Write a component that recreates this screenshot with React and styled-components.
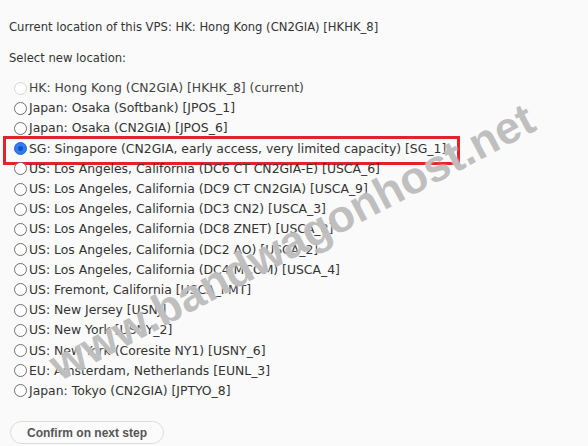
import React from "react";
import styled, { createGlobalStyle } from "styled-components";

const Global = createGlobalStyle`
  html, body { margin: 0; padding: 0; background: #fafafa; }
  body { font-family: "DejaVu Sans", Verdana, sans-serif; }
`;

const Page = styled.div`
  position: relative;
  width: 588px;
  height: 446px;
  overflow: hidden;
  padding: 17px 0 0 9px;
  box-sizing: border-box;
  color: #333;
  font-size: 12px;
`;

const Para = styled.div`
  line-height: 20px;
  font-size: 11.6px;
  margin-bottom: ${(p) => p.$mb || 0}px;
`;

const List = styled.div`
  display: flex;
  flex-direction: column;
  margin-left: 5px;
`;

const Row = styled.label`
  position: relative;
  display: flex;
  align-items: center;
  height: 20.2px;
  line-height: 20px;
  font-size: 12.4px;
  white-space: nowrap;
  color: ${(p) => (p.$disabled ? "#444" : "#333")};
`;

const Highlight = styled.span`
  position: absolute;
  left: -11px;
  top: -3px;
  width: 457px;
  height: 29px;
  border: 3px solid #e3222c;
  box-sizing: border-box;
  pointer-events: none;
`;

const Radio = styled.span`
  width: 13px;
  height: 13px;
  border-radius: 50%;
  box-sizing: border-box;
  margin-right: 2px;
  flex: none;
  background: ${(p) => (p.$checked ? "#2f7cf6" : "#fff")};
  border: 1px solid
    ${(p) => (p.$disabled ? "#d6d6d6" : p.$checked ? "#1f66d8" : "#6f6f6f")};
  display: flex;
  align-items: center;
  justify-content: center;
  &::after {
    content: "";
    display: ${(p) => (p.$checked ? "block" : "none")};
    width: 5px;
    height: 5px;
    border-radius: 50%;
    background: #1b4fb8;
  }
`;

const Button = styled.button`
  margin-top: 20px;
  margin-left: 1px;
  width: 154px;
  height: 23px;
  border-radius: 12px;
  border: 1px solid #dcdcdc;
  background: #fbfbfb;
  color: #555;
  font-family: "Liberation Sans", Arial, sans-serif;
  font-weight: bold;
  font-size: 12px;
  padding: 0;
`;

const Watermark = styled.div`
  position: absolute;
  left: 292px;
  top: 242px;
  transform: translate(-50%, -50%) rotate(-27.8deg);
  font-family: "Liberation Sans", Arial, sans-serif;
  font-weight: bold;
  font-size: 45px;
  color: rgba(180, 180, 180, 0.85);
  white-space: nowrap;
  text-shadow: 0 0 2px rgba(255, 255, 255, 0.9);
  pointer-events: none;
`;

const locations = [
  { t: "HK: Hong Kong (CN2GIA) [HKHK_8] (current)", disabled: true },
  { t: "Japan: Osaka (Softbank) [JPOS_1]" },
  { t: "Japan: Osaka (CN2GIA) [JPOS_6]" },
  { t: "SG: Singapore (CN2GIA, early access, very limited capacity) [SG_1]", checked: true },
  { t: "US: Los Angeles, California (DC6 CT CN2GIA-E) [USCA_6]" },
  { t: "US: Los Angeles, California (DC9 CT CN2GIA) [USCA_9]" },
  { t: "US: Los Angeles, California (DC3 CN2) [USCA_3]" },
  { t: "US: Los Angeles, California (DC8 ZNET) [USCA_8]" },
  { t: "US: Los Angeles, California (DC2 AO) [USCA_2]" },
  { t: "US: Los Angeles, California (DC4 MCOM) [USCA_4]" },
  { t: "US: Fremont, California [USCA_FMT]" },
  { t: "US: New Jersey [USNJ]" },
  { t: "US: New York [USNY_2]" },
  { t: "US: New York (Coresite NY1) [USNY_6]" },
  { t: "EU: Amsterdam, Netherlands [EUNL_3]" },
  { t: "Japan: Tokyo (CN2GIA) [JPTYO_8]" },
];

export default function App() {
  return (
    <>
      <Global />
      <Page>
        <Para $mb={11}>Current location of this VPS: HK: Hong Kong (CN2GIA) [HKHK_8]</Para>
        <Para $mb={10}>Select new location:</Para>
        <List>
          {locations.map((l) => (
            <Row key={l.t} $disabled={l.disabled}>
              <Radio $checked={l.checked} $disabled={l.disabled} />
              {l.t}
              {l.checked && <Highlight />}
            </Row>
          ))}
        </List>
        <Button>Confirm on next step</Button>
        <Watermark>www.bandwagonhost.net</Watermark>
      </Page>
    </>
  );
}
